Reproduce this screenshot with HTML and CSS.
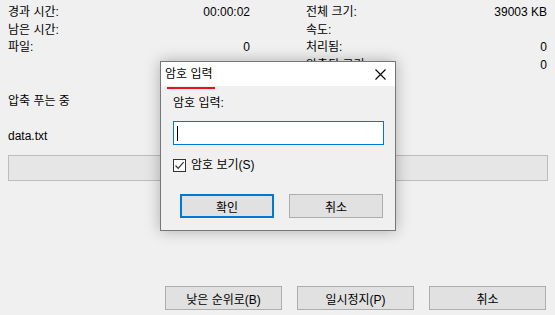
FILE: index.html
```html
<!DOCTYPE html>
<html>
<head>
  <meta charset="utf-8">
  <title>압축 푸는 중</title>
  <link rel="stylesheet" href="styles.css">
</head>
<body>
 <div class="stats">
  <div class="col">
   <div class="row"><span>경과 시간:</span><span>00:00:02</span></div>
   <div class="row"><span>남은 시간:</span><span></span></div>
   <div class="row"><span>파일:</span><span>0</span></div>
  </div>
  <div class="col">
   <div class="row"><span>전체 크기:</span><span>39003 KB</span></div>
   <div class="row"><span>속도:</span><span></span></div>
   <div class="row"><span>처리됨:</span><span>0</span></div>
   <div class="row"><span>압축된 크기:</span><span>0</span></div>
  </div>
 </div>

 <div class="status">압축 푸는 중</div>
 <div class="filename">data.txt</div>
 <div class="progress"></div>

 <div class="actions">
  <button class="btn">낮은 순위로(B)</button>
  <button class="btn">일시정지(P)</button>
  <button class="btn">취소</button>
 </div>

 <!-- password prompt on top -->
 <div class="dialog">
  <div class="titlebar">
   <span class="title">암호 입력</span>
   <svg class="close" width="11" height="11" viewBox="0 0 11 11">
    <path d="M0.5 0.5 L10.5 10.5 M10.5 0.5 L0.5 10.5" stroke="#000" stroke-width="1.1" fill="none"/>
   </svg>
  </div>
  <div class="dialog-body">
   <div class="prompt">암호 입력:</div>
   <div class="field"><span class="caret"></span></div>
   <label class="check">
    <span class="box">
     <svg width="11" height="11" viewBox="0 0 11 11">
      <path d="M1.5 5.5 L4.2 8.3 L9.6 2.2" stroke="#333" stroke-width="1.2" fill="none"/>
     </svg>
    </span>
    암호 보기(S)
   </label>
   <div class="dialog-buttons">
    <button class="btn btn-default">확인</button>
    <button class="btn">취소</button>
   </div>
  </div>
 </div>
</body>
</html>
```

FILE: styles.css
```css
body {
  margin: 0;
  padding: 4px 8px 0 8px;
  background-color: #f0f0f0;
  color: #000;
  font-family: "Liberation Sans", "Noto Sans CJK KR", sans-serif;
  font-size: 12px;
  height: 311px;
  overflow: hidden;
}

.stats {
  display: grid;
  grid-template-columns: 242px 241px;
  column-gap: 56px;
}

.row {
  display: flex;
  justify-content: space-between;
  height: 17.5px;
  line-height: 17px;
}

.status {
  margin-top: 19px;
  line-height: 17px;
}

.filename {
  margin-top: 18px;
  line-height: 17px;
}

.progress {
  margin-top: 10px;
  height: 24px;
  width: 538px;
  background-color: #e6e6e6;
  border: 1px solid #bcbcbc;
}

.actions {
  display: flex;
  justify-content: flex-end;
  gap: 15px;
  margin-top: 105px;
  padding-right: 1px;
}

.actions .btn {
  width: 117px;
}

.btn {
  height: 24px;
  background-color: #e1e1e1;
  border: 1px solid #adadad;
  font-family: "Liberation Sans", "Noto Sans CJK KR", sans-serif;
  font-size: 12px;
  color: #000;
  padding: 0;
}

/* dialog */
.dialog {
  position: absolute;
  left: 160px;
  top: 61px;
  width: 234px;
  height: 168px;
  border: 1px solid #767676;
  background-color: #f0f0f0;
  box-shadow: 0 0 14px rgba(0, 0, 0, 0.28);
}

.titlebar {
  display: flex;
  align-items: center;
  justify-content: space-between;
  height: 24px;
  background-color: #fff;
  padding: 0 9px 0 4px;
}

.title {
  position: relative;
  line-height: 17px;
  font-size: 12px;
}

.title::after {
  content: "";
  position: absolute;
  left: 2px;
  right: -2px;
  bottom: -6px;
  height: 2px;
  background-color: #e81123;
}

.dialog-body {
  padding: 9px 11px 0 12px;
}

.prompt {
  line-height: 17px;
}

.field {
  margin-top: 9px;
  height: 22px;
  background-color: #fff;
  border: 1px solid #0078d7;
  display: flex;
  align-items: center;
  padding-left: 3px;
}

.caret {
  width: 1px;
  height: 15px;
  background-color: #000;
}

.check {
  display: flex;
  align-items: center;
  gap: 5px;
  margin-top: 12px;
  line-height: 17px;
}

.box {
  width: 11px;
  height: 11px;
  border: 1px solid #333;
  background-color: #fff;
  display: flex;
}

.dialog-buttons {
  display: flex;
  justify-content: space-between;
  margin-top: 20px;
  padding: 0 1px 0 7px;
}

.dialog-buttons .btn {
  width: 94px;
}

.btn-default {
  border: 2px solid #0078d7;
}
```
